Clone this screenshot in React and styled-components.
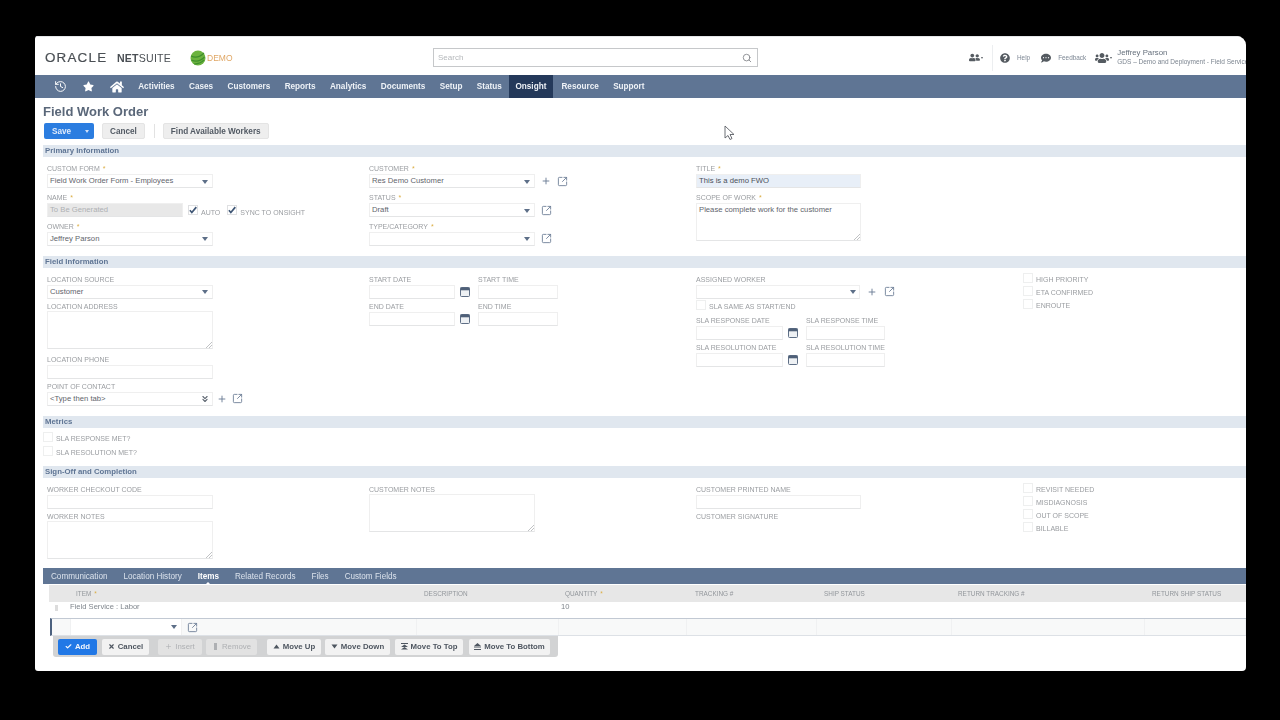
import React from "react";
import styled, { createGlobalStyle } from "styled-components";
import { History, Search, Plus, SquareArrowOutUpRight, ChevronsDown, Check, X } from "lucide-react";
import { FaStar, FaHome, FaQuestionCircle, FaCommentDots, FaUsers, FaUserFriends } from "react-icons/fa";

const Global = createGlobalStyle`
  html, body { margin: 0; padding: 0; background: #000; height: 100%; overflow: hidden; }
  * { box-sizing: border-box; }
  body { font-family: "Liberation Sans", Arial, sans-serif; }
`;

const Page = styled.div`
  width: 1280px;
  height: 720px;
  padding: 36px 34px 49px 35px;
  background: #000;
`;

const Screen = styled.main`
  position: relative;
  width: 1211px;
  height: 635px;
  background: #fff;
  overflow: hidden;
  border-radius: 3px 9px 4px 3px;
  filter: blur(0.5px);
`;

const Header = styled.header`
  height: 39px;
  display: flex;
  align-items: center;
  border-top: 1px solid #e4e6e8;
  padding: 3px 0 0 10px;
`;

const Logo = styled.div`
  flex: none;
  width: 145px;
  display: flex;
  align-items: baseline;
  font-size: 10.6px;
  color: #4a4f54;
  letter-spacing: 0.2px;
  white-space: nowrap;
`;

const LogoWide = styled.span`
  display: inline-block;
  width: 72px;
  letter-spacing: 1.2px;
  font-size: 13.4px;
  -webkit-text-stroke: 0.2px #4a4f54;
`;

const LogoBold = styled.b`
  font-weight: 700;
`;

const Demo = styled.div`
  flex: none;
  width: 243px;
  display: flex;
  align-items: center;
  font-size: 8.5px;
  color: #e0a765;
  gap: 1px;
`;

const SearchBox = styled.div`
  flex: none;
  width: 325px;
  height: 19px;
  border: 1px solid #c6c8ca;
  display: flex;
  align-items: center;
  justify-content: space-between;
  padding: 0 5px 0 4px;
  font-size: 8px;
  color: #b5b8bb;
`;

const HeaderTools = styled.div`
  flex: none;
  margin-left: 211px;
  display: flex;
  align-items: center;
  color: #555b61;
  white-space: nowrap;
`;

const ToolLabel = styled.span`
  font-size: 6.4px;
  color: #7d8794;
  margin: 0 ${(p) => p.$right}px 0 ${(p) => p.$left}px;
`;

const Divider = styled.span`
  width: 1px;
  height: 26px;
  background: #eceef0;
  margin: 0 7px 0 9px;
`;

const UserBlock = styled.div`
  margin-left: 5px;
  display: flex;
  flex-direction: column;
  margin-top: -1px;
`;

const UserName = styled.span`
  font-size: 7.8px;
  line-height: 9px;
  color: #66707c;
`;

const UserRole = styled.span`
  font-size: 6.5px;
  line-height: 9px;
  color: #7c8590;
`;

const Caret = styled.span`
  width: 0;
  height: 0;
  margin-left: 1px;
  border-left: 1.5px solid transparent;
  border-right: 1.5px solid transparent;
  border-top: 2px solid #555b61;
`;

const Nav = styled.nav`
  height: 23px;
  background: #5f7594;
  display: flex;
  align-items: stretch;
  padding-left: 18px;
  color: #fff;
`;

const NavIcon = styled.div`
  width: ${(p) => p.$w}px;
  display: flex;
  align-items: center;
  justify-content: center;
`;

const NavItem = styled.a`
  display: flex;
  align-items: center;
  padding: 0 ${(p) => p.$pad ?? 7.2}px;
  margin-right: ${(p) => p.$after ?? 0}px;
  font-size: 8.2px;
  font-weight: 700;
  color: #eef2f7;
  background: ${(p) => (p.$active ? "#24395a" : "transparent")};
`;

const TitleBlock = styled.div`
  height: 47px;
  padding: 6px 0 0 8px;
`;

const Title = styled.h1`
  margin: 0;
  height: 15px;
  font-size: 13px;
  line-height: 15px;
  font-weight: 700;
  color: #5a6779;
`;

const Toolbar = styled.div`
  display: flex;
  align-items: center;
  margin-top: 4px;
  margin-left: 1px;
`;

const SaveButton = styled.div`
  width: 50px;
  height: 16px;
  background: #2b7de0;
  border-radius: 2px;
  color: #dfeafb;
  display: flex;
  align-items: center;
  font-size: 8.2px;
  font-weight: 700;
  padding-left: 8px;
  justify-content: space-between;
  padding-right: 5px;
`;

const SaveArrow = styled.span`
  width: 0;
  height: 0;
  border-left: 2.5px solid transparent;
  border-right: 2.5px solid transparent;
  border-top: 3px solid #cfe0f8;
`;

const PageButton = styled.div`
  height: 16px;
  padding: 0 ${(p) => p.$pad}px;
  margin-left: ${(p) => p.$left}px;
  background: #eeeeee;
  border: 1px solid #e4e4e4;
  border-radius: 2px;
  display: flex;
  align-items: center;
  font-size: 8.2px;
  font-weight: 700;
  color: #525a64;
`;

const VLine = styled.span`
  width: 1px;
  height: 14px;
  background: #e2e2e2;
  margin-left: 9px;
`;

const Bar = styled.div`
  height: 12px;
  margin-left: 8px;
  padding-left: 2px;
  background: #e0e7ef;
  font-size: 7.8px;
  line-height: 12px;
  font-weight: 700;
  color: #5f7594;
`;

const SectionBody = styled.section`
  height: ${(p) => p.$h}px;
  padding: ${(p) => p.$top}px 0 0 12px;
  display: grid;
  grid-template-columns: 322px 327px 327px 1fr;
  align-content: start;
`;

const Column = styled.div`
  display: flex;
  flex-direction: column;
  align-items: flex-start;
`;

const FieldWrap = styled.div`
  margin-bottom: ${(p) => p.$gap ?? 2}px;
`;

const Label = styled.div`
  height: 11px;
  font-size: 7px;
  line-height: 11px;
  color: #9a9da1;
  white-space: nowrap;
`;

const Star = styled.span`
  color: #dcae45;
  margin-left: 3px;
`;

const InputBox = styled.div`
  position: relative;
  width: ${(p) => p.$w ?? 166}px;
  height: ${(p) => p.$h ?? 14}px;
  margin-top: ${(p) => p.$shift ?? 0}px;
  border: 1px solid #efefef;
  border-bottom-color: #e4e5e6;
  background: ${(p) => p.$bg ?? "#fff"};
  font-size: 7.7px;
  line-height: 12px;
  color: ${(p) => p.$color ?? "#5f656c"};
  padding-left: 2px;
  white-space: nowrap;
`;

const Arrow = styled.span`
  position: absolute;
  right: ${(p) => p.$right ?? 4.5}px;
  top: ${(p) => p.$y ?? 4.5}px;
  width: 0;
  height: 0;
  border-left: 3px solid transparent;
  border-right: 3px solid transparent;
  border-top: 4px solid #5d6f88;
`;

const DoubleArrow = styled.span`
  position: absolute;
  right: 2px;
  top: 1px;
  color: #5c6570;
  display: flex;
`;

const Resize = styled.svg`
  position: absolute;
  right: 0;
  bottom: 0;
`;

const Line = styled.div`
  display: flex;
  align-items: ${(p) => p.$align ?? "center"};
`;

const DateLabel = styled(Label)`
  width: ${(p) => p.$w + 23}px;
`;

const TimeBox = styled(InputBox)`
  margin-left: 8px;
`;

const IconSlot = styled.span`
  display: flex;
  color: #6a7c94;
  margin-left: ${(p) => p.$left}px;
`;

const CheckRow = styled.div`
  display: flex;
  align-items: flex-start;
  height: ${(p) => p.$h ?? 13}px;
  margin-left: ${(p) => p.$left ?? 0}px;
  margin-bottom: ${(p) => p.$gap ?? 0}px;
`;

const Box = styled.span`
  width: 10px;
  height: 10px;
  border: 1px solid ${(p) => (p.$checked ? "#dfe0e2" : "#eeefef")};
  background: #fff;
  color: #3f5675;
  display: flex;
  align-items: center;
  justify-content: center;
  flex: none;
`;

const CheckText = styled.span`
  font-size: 7px;
  line-height: 11px;
  margin-top: ${(p) => p.$drop ?? 1}px;
  margin-left: 3px;
  color: #9a9da1;
  white-space: nowrap;
`;

const InlineChecks = styled.div`
  display: flex;
  margin-left: 5px;
  margin-top: 13px;
  gap: 7px;
`;

const CheckList = styled.div`
  margin-top: -1px;
`;

const Tabs = styled.div`
  height: 16px;
  margin-left: 8px;
  padding-left: 8px;
  background: #5f7594;
  display: flex;
  align-items: center;
  gap: 16px;
`;

const Tab = styled.span`
  position: relative;
  font-size: 8.15px;
  font-weight: ${(p) => (p.$active ? 700 : 400)};
  color: ${(p) => (p.$active ? "#fff" : "#dbe2ec")};
  &::after {
    content: " ";
    position: absolute;
    left: 50%;
    bottom: -4px;
    margin-left: -3px;
    border-left: 3px solid transparent;
    border-right: 3px solid transparent;
    border-bottom: 3px solid #fff;
    display: ${(p) => (p.$active ? "block" : "none")};
  }
`;

const cols = "20px 346px 142px 128px 130px 135px 193px 1fr";

const TableHead = styled.div`
  height: 17px;
  margin-top: 1px;
  margin-left: 14px;
  background: #e7e7e7;
  display: grid;
  grid-template-columns: ${cols};
  align-items: center;
`;

const HeadCell = styled.span`
  font-size: 6.4px;
  color: #92969b;
  padding-left: ${(p) => p.$pad ?? 8}px;
  white-space: nowrap;
`;

const TableRow = styled.div`
  height: 16px;
  margin-left: 14px;
  padding-bottom: 7px;
  display: grid;
  grid-template-columns: ${cols};
  align-items: center;
  font-size: 7.6px;
  color: #7f858c;
`;

const Grip = styled.span`
  width: 3px;
  height: 6px;
  margin-left: 6px;
  margin-top: 3px;
  background: #dcdcdc;
`;

const Cell = styled.span`
  padding-left: ${(p) => p.$pad ?? 1}px;
`;

const EditRow = styled.div`
  height: 18px;
  margin-left: 15px;
  display: grid;
  grid-template-columns: 19px 346px 142px 128px 130px 135px 193px 1fr;
  background: #f8f9f9;
  border-top: 1px solid #c2c9d3;
  border-bottom: 1px solid #dde1e6;
  border-left: 2px solid #4c617f;
`;

const EditCell = styled.div`
  border-right: 1px solid #f0f1f2;
  display: flex;
  align-items: center;
`;

const EditSelect = styled.div`
  position: relative;
  width: 111px;
  height: 16px;
  background: #fff;
  border-right: 1px solid #f0f0f0;
`;

const ActionBar = styled.div`
  width: 505px;
  height: 21px;
  margin-left: 18px;
  background: #d2d3d4;
  border-radius: 0 0 3px 3px;
  display: flex;
  align-items: center;
  padding-left: 5px;
`;

const ActionButton = styled.div`
  width: ${(p) => p.$w}px;
  height: 16px;
  margin-left: ${(p) => p.$left ?? 4}px;
  border-radius: 2px;
  background: ${(p) => (p.$primary ? "#2178e6" : p.$disabled ? "#e2e2e2" : "#f2f2f2")};
  color: ${(p) => (p.$primary ? "#f2f6fd" : p.$disabled ? "#aeb0b3" : "#4e5660")};
  font-size: 7.8px;
  font-weight: ${(p) => (p.$disabled ? 400 : 700)};
  display: flex;
  align-items: center;
  justify-content: center;
  gap: 3px;
  white-space: nowrap;
`;

const Cursor = styled.svg`
  position: absolute;
  left: 689px;
  top: 89px;
`;

const Field = ({ label, req, gap, children }) => (
  <FieldWrap $gap={gap}>
    <Label>
      {label}
      {req && <Star>*</Star>}
    </Label>
    {children}
  </FieldWrap>
);

const ResizeMark = () => (
  <Resize width="7" height="7" viewBox="0 0 7 7">
    <path d="M1 7 7 1M4 7l3-3" stroke="#a5a8ab" strokeWidth="0.7" fill="none" />
  </Resize>
);

const Select = ({ value, w, arrowRight }) => (
  <InputBox $w={w}>
    {value}
    <Arrow $right={arrowRight} />
  </InputBox>
);

const Open = ({ left = 5 }) => (
  <IconSlot $left={left}>
    <SquareArrowOutUpRight size={11} strokeWidth={1.9} />
  </IconSlot>
);

const Add = ({ left = 6 }) => (
  <IconSlot $left={left}>
    <Plus size={10} strokeWidth={2.2} />
  </IconSlot>
);

const Calendar = () => (
  <IconSlot $left={5}>
    <svg width="10" height="10" viewBox="0 0 10 10">
      <rect x="0.5" y="0.5" width="9" height="9" rx="1" fill="#eef1f4" stroke="#5f6f86" />
      <rect x="0.5" y="0.5" width="9" height="2.8" fill="#4f6078" />
    </svg>
  </IconSlot>
);

const CheckItem = ({ label, checked, h, left, gap, drop }) => (
  <CheckRow $h={h} $left={left} $gap={gap}>
    <Box $checked={checked}>
      {checked && (
        <svg width="9" height="8" viewBox="0 0 9 8">
          <path d="M1 4.2 3.2 6.8 8.2 0.8" stroke="currentColor" strokeWidth="1.9" fill="none" />
        </svg>
      )}
    </Box>
    <CheckText $drop={drop}>{label}</CheckText>
  </CheckRow>
);

const DateTime = ({ dateLabel, timeLabel, gap, dw, tw }) => (
  <FieldWrap $gap={gap}>
    <Line>
      <DateLabel $w={dw}>{dateLabel}</DateLabel>
      <Label>{timeLabel}</Label>
    </Line>
    <Line>
      <InputBox $w={dw} />
      <Calendar />
      <TimeBox $w={tw} />
    </Line>
  </FieldWrap>
);

const Glyph = ({ d }) => (
  <svg width="7" height="7" viewBox="0 0 7 7">
    <path d={d} fill="currentColor" />
  </svg>
);

const navItems = ["Activities", "Cases", "Customers", "Reports", "Analytics", "Documents", "Setup", "Status"];
const tabs = ["Communication", "Location History", "Items", "Related Records", "Files", "Custom Fields"];

export default function App() {
  return (
    <Page>
      <Global />
      <Screen>
        <Header>
          <Logo>
            <LogoWide>ORACLE</LogoWide>
            <LogoBold>NET</LogoBold>SUITE
          </Logo>
          <Demo>
            <svg width="16" height="16" viewBox="0 0 16 16">
              <circle cx="8" cy="8" r="7.5" fill="#6cb33f" />
              <path d="M1 6c4 2 9 1 13-3M1.5 10c4 2 9 1 13-3M4 14c4 0 8-2 10-4" stroke="#3f8f2c" strokeWidth="1.1" fill="none" />
            </svg>
            DEMO
          </Demo>
          <SearchBox>
            Search
            <Search size={10} color="#7e8185" strokeWidth={2} />
          </SearchBox>
          <HeaderTools>
            <FaUserFriends size={11} />
            <Caret />
            <Divider />
            <FaQuestionCircle size={10} />
            <ToolLabel $left={7} $right={11}>Help</ToolLabel>
            <FaCommentDots size={10} />
            <ToolLabel $left={7} $right={9}>Feedback</ToolLabel>
            <FaUsers size={14} />
            <Caret />
            <UserBlock>
              <UserName>Jeffrey Parson</UserName>
              <UserRole>GDS – Demo and Deployment - Field Services</UserRole>
            </UserBlock>
          </HeaderTools>
        </Header>

        <Nav>
          <NavIcon $w={14}><History size={13} strokeWidth={1.8} /></NavIcon>
          <NavIcon $w={42}><FaStar size={11} /></NavIcon>
          <NavIcon $w={16}><FaHome size={14} /></NavIcon>
          <NavIcon $w={6} />
          {navItems.map((n) => (
            <NavItem key={n}>{n}</NavItem>
          ))}
          <NavItem $active $pad={6.4} $after={1.5}>Onsight</NavItem>
          <NavItem>Resource</NavItem>
          <NavItem>Support</NavItem>
        </Nav>

        <TitleBlock>
          <Title>Field Work Order</Title>
          <Toolbar>
            <SaveButton>
              Save
              <SaveArrow />
            </SaveButton>
            <PageButton $pad={7} $left={8}>Cancel</PageButton>
            <VLine />
            <PageButton $pad={7} $left={8}>Find Available Workers</PageButton>
          </Toolbar>
        </TitleBlock>

        <Bar>Primary Information</Bar>
        <SectionBody $h={99} $top={6}>
          <Column>
            <Field label="CUSTOM FORM" req gap={4.2}><Select value="Field Work Order Form - Employees" /></Field>
            <Line $align="flex-start">
              <Field label="NAME" req gap={3.7}>
                <InputBox $w={136} $bg="#e8e8e8" $color="#aeb0b3">To Be Generated</InputBox>
              </Field>
              <InlineChecks>
                <CheckItem label="AUTO" checked drop={2} />
                <CheckItem label="SYNC TO ONSIGHT" checked drop={2} />
              </InlineChecks>
            </Line>
            <Field label="OWNER" req><Select value="Jeffrey Parson" /></Field>
          </Column>
          <Column>
            <Field label="CUSTOMER" req gap={4.2}>
              <Line><Select value="Res Demo Customer" /><Add /><Open left={6} /></Line>
            </Field>
            <Field label="STATUS" req gap={3.7}>
              <Line><Select value="Draft" /><Open left={6} /></Line>
            </Field>
            <Field label="TYPE/CATEGORY" req>
              <Line><Select /><Open left={6} /></Line>
            </Field>
          </Column>
          <Column>
            <Field label="TITLE" req gap={4.2}>
              <InputBox $w={165} $bg="#e8eff8" $color="#4a5058">This is a demo FWO</InputBox>
            </Field>
            <Field label="SCOPE OF WORK" req>
              <InputBox $w={165} $h={38}>Please complete work for the customer<ResizeMark /></InputBox>
            </Field>
          </Column>
          <Column />
        </SectionBody>

        <Bar>Field Information</Bar>
        <SectionBody $h={148} $top={5.5}>
          <Column>
            <Field label="LOCATION SOURCE"><Select value="Customer" /></Field>
            <Field label="LOCATION ADDRESS" gap={5}>
              <InputBox $h={38} $shift={-1}><ResizeMark /></InputBox>
            </Field>
            <Field label="LOCATION PHONE"><InputBox /></Field>
            <Field label="POINT OF CONTACT">
              <Line>
                <InputBox>
                  {"<Type then tab>"}
                  <DoubleArrow><ChevronsDown size={10} strokeWidth={2.6} /></DoubleArrow>
                </InputBox>
                <Add left={4} /><Open left={5} />
              </Line>
            </Field>
          </Column>
          <Column>
            <DateTime dateLabel="START DATE" timeLabel="START TIME" dw={86} tw={80} gap={2} />
            <DateTime dateLabel="END DATE" timeLabel="END TIME" dw={86} tw={80} />
          </Column>
          <Column>
            <Field label="ASSIGNED WORKER" gap={1.5}>
              <Line><Select w={164} arrowRight={3} /><Add left={7} /><Open left={7} /></Line>
            </Field>
            <CheckItem label="SLA SAME AS START/END" h={12} gap={2.5} />
            <DateTime dateLabel="SLA RESPONSE DATE" timeLabel="SLA RESPONSE TIME" dw={87} tw={79} gap={2} />
            <DateTime dateLabel="SLA RESOLUTION DATE" timeLabel="SLA RESOLUTION TIME" dw={87} tw={79} />
          </Column>
          <CheckList>
            <CheckItem label="HIGH PRIORITY" />
            <CheckItem label="ETA CONFIRMED" />
            <CheckItem label="ENROUTE" />
          </CheckList>
        </SectionBody>

        <Bar>Metrics</Bar>
        <SectionBody $h={38} $top={4}>
          <Column>
            <CheckItem label="SLA RESPONSE MET?" left={-4} h={13.5} />
            <CheckItem label="SLA RESOLUTION MET?" left={-4} />
          </Column>
        </SectionBody>

        <Bar>Sign-Off and Completion</Bar>
        <SectionBody $h={90} $top={5.5}>
          <Column>
            <Field label="WORKER CHECKOUT CODE"><InputBox /></Field>
            <Field label="WORKER NOTES"><InputBox $h={38} $shift={-1}><ResizeMark /></InputBox></Field>
          </Column>
          <Column>
            <Field label="CUSTOMER NOTES"><InputBox $h={38} $shift={-1}><ResizeMark /></InputBox></Field>
          </Column>
          <Column>
            <Field label="CUSTOMER PRINTED NAME"><InputBox $w={165} /></Field>
            <Label>CUSTOMER SIGNATURE</Label>
          </Column>
          <CheckList>
            <CheckItem label="REVISIT NEEDED" />
            <CheckItem label="MISDIAGNOSIS" />
            <CheckItem label="OUT OF SCOPE" />
            <CheckItem label="BILLABLE" />
          </CheckList>
        </SectionBody>

        <Tabs>
          {tabs.map((t) => (
            <Tab key={t} $active={t === "Items"}>{t}</Tab>
          ))}
        </Tabs>

        <TableHead>
          <span />
          <HeadCell $pad={7}>ITEM<Star>*</Star></HeadCell>
          <HeadCell $pad={9}>DESCRIPTION</HeadCell>
          <HeadCell>QUANTITY<Star>*</Star></HeadCell>
          <HeadCell $pad={10}>TRACKING #</HeadCell>
          <HeadCell $pad={9}>SHIP STATUS</HeadCell>
          <HeadCell>RETURN TRACKING #</HeadCell>
          <HeadCell $pad={9}>RETURN SHIP STATUS</HeadCell>
        </TableHead>
        <TableRow>
          <Grip />
          <Cell>Field Service : Labor</Cell>
          <span />
          <Cell $pad={4}>10</Cell>
        </TableRow>
        <EditRow>
          <EditCell />
          <EditCell>
            <EditSelect><Arrow $y={6} /></EditSelect>
            <Open left={5} />
          </EditCell>
          <EditCell />
          <EditCell />
          <EditCell />
          <EditCell />
          <EditCell />
          <EditCell />
        </EditRow>
        <ActionBar>
          <ActionButton $primary $w={39} $left={0}><Check size={7} strokeWidth={4} />Add</ActionButton>
          <ActionButton $w={47} $left={5}><X size={7} strokeWidth={4} />Cancel</ActionButton>
          <ActionButton $disabled $w={44} $left={9}><Plus size={7} strokeWidth={2} />Insert</ActionButton>
          <ActionButton $disabled $w={51} $left={4}><Glyph d="M2 0h3v7H2z" />Remove</ActionButton>
          <ActionButton $w={54} $left={10}><Glyph d="M3.5 1.5 6.5 5.5h-6z" />Move Up</ActionButton>
          <ActionButton $w={65}><Glyph d="M3.5 5.5 6.5 1.5h-6z" />Move Down</ActionButton>
          <ActionButton $w={68} $left={5}><Glyph d="M0 0h7v1H0zM3.5 1.5 7 4H0zM3.5 4 7 6.5H0z" />Move To Top</ActionButton>
          <ActionButton $w={81} $left={6}><Glyph d="M3.5 0 7 3H0zM0 3.5h7v1H0zM0 6h7v1H0z" />Move To Bottom</ActionButton>
        </ActionBar>

        <Cursor width="11" height="16" viewBox="0 0 11 16">
          <path d="M1 1v12l3-2.5 2 4 2-1-2-4h4z" fill="#fff" stroke="#5c6066" strokeWidth="0.9" />
        </Cursor>
      </Screen>
    </Page>
  );
}
